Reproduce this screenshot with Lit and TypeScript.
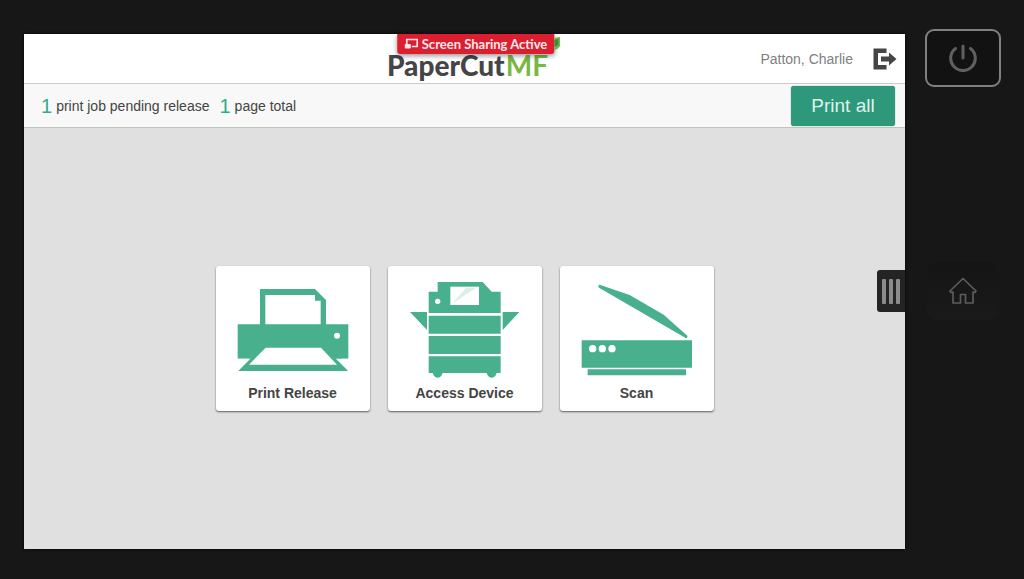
import { LitElement, html, css, svg } from "lit";
import { customElement, state } from "lit/decorators.js";

const printerIcon = svg`
  <svg class="art" viewBox="94 78 336 306" aria-hidden="true">
    <path d="M163 102H328L361 135V208H428V311H408L427 348H98L131 311H96V208H163ZM179 120V208H345V137H328V120Z" fill="#48b08c" fill-rule="evenodd"/>
    <path d="M96 311H135L98 348H96ZM428 311H390L427 348H428Z" fill="#fff"/>
    <path d="M98 348L135 311H390L427 348Z" fill="#48b08c"/>
    <path d="M180 278H346L394 329H130Z" fill="#fff"/>
    <circle cx="394" cy="242" r="9" fill="#fff"/>
  </svg>`;

const deviceIcon = svg`
  <svg class="art" viewBox="86 78 336 306" aria-hidden="true">
    <g fill="#48b08c">
      <path d="M172 81H307L334 110H361V174H145V110H172Z"/>
      <path d="M145 182H361V236H145ZM145 243H361V297H145ZM145 304H361V354H145Z"/>
      <path d="M89 171H140V225ZM417 171H367V225Z"/>
      <path d="M157 352A15 16 0 0 0 187 352ZM319 352A15 16 0 0 0 349 352Z"/>
    </g>
    <path d="M210 95H296V150H210Z" fill="#fff"/>
    <path d="M214 147L258 98H288Z" fill="#dcefe7"/>
    <circle cx="172" cy="139" r="8" fill="#fff"/>
  </svg>`;

const scannerIcon = svg`
  <svg class="art" viewBox="92 78 336 306" aria-hidden="true">
    <g fill="#48b08c">
      <path d="M148 89L238 120L340 179L411 242Q413 249 406 249L146 98Q141 91 148 89Z"/>
      <path d="M94 256H425V338H94ZM112 343H407V361H112Z"/>
    </g>
    <g fill="#fff">
      <circle cx="127" cy="281" r="11"/>
      <circle cx="156" cy="281" r="11"/>
      <circle cx="185" cy="281" r="11"/>
    </g>
  </svg>`;

@customElement("app-root")
export class AppRoot extends LitElement {
  @state() private user = "Patton, Charlie";
  @state() private jobs = 1;
  @state() private pages = 1;

  private tiles = [
    { label: "Print Release", icon: printerIcon },
    { label: "Access Device", icon: deviceIcon },
    { label: "Scan", icon: scannerIcon },
  ];

  static styles = css`
    :host {
      display: grid;
      grid-template-columns: minmax(0, 1fr) 119px;
      min-height: 100vh;
      background: #171717;
      font-family: "Liberation Sans", Arial, sans-serif;
      color: #444;
    }
    * { box-sizing: border-box; }
    button { font: inherit; color: inherit; border: 0; padding: 0; margin: 0; background: none; cursor: pointer; }
    svg { display: block; }

    .screen {
      position: relative;
      display: flex;
      flex-direction: column;
      margin: 34px 0 30px 24px;
      background: #e0e0e0;
      box-shadow: 0 0 3px #000;
    }
    .header {
      display: grid;
      grid-template-columns: 1fr auto 1fr;
      align-items: center;
      height: 50px;
      padding: 0 8px 0 14px;
      background: #fff;
      border-bottom: 1px solid #c5cfc3;
    }
    .logo {
      grid-column: 2;
      display: flex;
      gap: 1px;
      padding-top: 12px;
      font: 900 28px/36px Lato, sans-serif;
      color: #454547;
    }
    .logo .mf { font-weight: 700; color: #78b843; }
    .account {
      display: flex;
      align-items: center;
      justify-content: flex-end;
      gap: 20px;
      font-size: 14px;
      color: #808080;
    }
    .badge {
      position: absolute;
      top: 0;
      left: 50%;
      z-index: 1;
      display: flex;
      align-items: center;
      gap: 4px;
      height: 20px;
      padding: 0 7px;
      transform: translateX(-43%);
      border-radius: 0 0 3px 3px;
      background: #dc1f30;
      box-shadow: 0 2px 5px rgba(0, 0, 0, 0.4);
      color: #fbe9ea;
      font: 700 13px/20px Lato, sans-serif;
      white-space: nowrap;
    }
    .leaf {
      position: absolute;
      top: 3px;
      left: 100%;
    }

    .jobs {
      display: flex;
      align-items: center;
      justify-content: space-between;
      height: 44px;
      padding: 0 10px 0 17px;
      background: #f8f8f8;
      border-bottom: 1px solid #bcc7ba;
    }
    .counts { display: flex; gap: 10px; margin: 0; font-size: 14px; line-height: 22px; }
    .counts span { display: flex; align-items: center; gap: 4px; }
    .counts b { font-size: 20px; font-weight: 400; color: #2fad87; }
    .print-all {
      width: 104px;
      height: 40px;
      border-radius: 3px;
      background: #2e987b;
      box-shadow: 0 0 1px #1c6d57;
      color: #dff3ec;
      font-size: 19px;
    }

    .home {
      flex: 1;
      display: flex;
      align-items: center;
      justify-content: center;
      gap: 18px;
    }
    .tile {
      display: flex;
      flex-direction: column;
      align-items: center;
      width: 154px;
      height: 145px;
      padding-top: 15px;
      border-radius: 3px;
      background: #fff;
      box-shadow: 0 1px 2px rgba(0, 0, 0, 0.6);
      font-size: 14px;
      font-weight: 700;
      line-height: 20px;
    }
    .art { width: 112px; height: 102px; }

    .drawer {
      position: absolute;
      right: 0;
      top: 236px;
      display: flex;
      align-items: center;
      justify-content: center;
      gap: 3px;
      width: 28px;
      height: 42px;
      border-radius: 3px 0 0 3px;
      background: #242424;
    }
    .drawer i { width: 4px; height: 25px; border-radius: 1px; background: #8b8b8b; }

    .panel {
      display: flex;
      flex-direction: column;
      align-items: center;
      gap: 175px;
      padding: 29px 4px 0 0;
    }
    .key {
      display: grid;
      place-items: center;
      width: 76px;
      height: 58px;
      border-radius: 9px;
      background: #121212;
    }
    .key.power { border: 2px solid #808080; }
    .key.house { width: 72px; background: linear-gradient(#151515, #1a1a1a); }
  `;

  render() {
    return html`
      <main class="screen">
        <header class="header">
          <div class="logo"><span>PaperCut</span><span class="mf">MF</span></div>
          <div class="account">
            <span>${this.user}</span>
            <button aria-label="Log out">
              <svg width="24" height="22" viewBox="0 0 24 22">
                <path d="M13.500 0.500H0.500V21.500H13.500V17H5V5H13.500ZM8 8.500H16V4.500L23.500 11L16 17.500V13.500H8Z" fill="#454547"/>
              </svg>
            </button>
          </div>
        </header>
        <div class="badge" role="status">
          <svg width="14" height="12" viewBox="0 0 14 12" fill="none" stroke="#fbe9ea" stroke-width="1.700">
            <path d="M2.500 6V1.500H13V8.500H7.500"/>
            <path d="M1 6.500H6V10H1Z" fill="#fbe9ea" stroke-width="1"/>
          </svg>
          <span>Screen Sharing Active</span>
          <svg class="leaf" width="6" height="13" viewBox="0 0 6 13" aria-hidden="true">
            <path d="M0 1L6 0V9L3 12L0 13Z" fill="#6db550"/>
            <path d="M0 3L4 2V8L0 10Z" fill="#3d8a35"/>
          </svg>
        </div>

        <section class="jobs">
          <p class="counts">
            <span><b>${this.jobs}</b> print job pending release</span>
            <span><b>${this.pages}</b> page total</span>
          </p>
          <button class="print-all">Print all</button>
        </section>

        <nav class="home">
          ${this.tiles.map((t) => html`<button class="tile">${t.icon}<span>${t.label}</span></button>`)}
        </nav>

        <button class="drawer" aria-label="Open drawer"><i></i><i></i><i></i></button>
      </main>

      <aside class="panel">
        <button class="key power" aria-label="Power">
          <svg width="28" height="28" viewBox="0 0 28 28" fill="none" stroke="#606060" stroke-width="3" stroke-linecap="round">
            <path d="M6.500 4.500A12.300 12.300 0 1 0 21.500 4.500M14 2V14"/>
          </svg>
        </button>
        <button class="key house" aria-label="Home">
          <svg width="28" height="28" viewBox="0 0 28 28" fill="none" stroke="#5c5c5c" stroke-width="1.700" stroke-linejoin="round">
            <path d="M14 1.500L1 14L2 15.500L4 15V26H11.500V17.500H16.500V26H24V15L26 15.500L27 14Z"/>
          </svg>
        </button>
      </aside>
    `;
  }
}
